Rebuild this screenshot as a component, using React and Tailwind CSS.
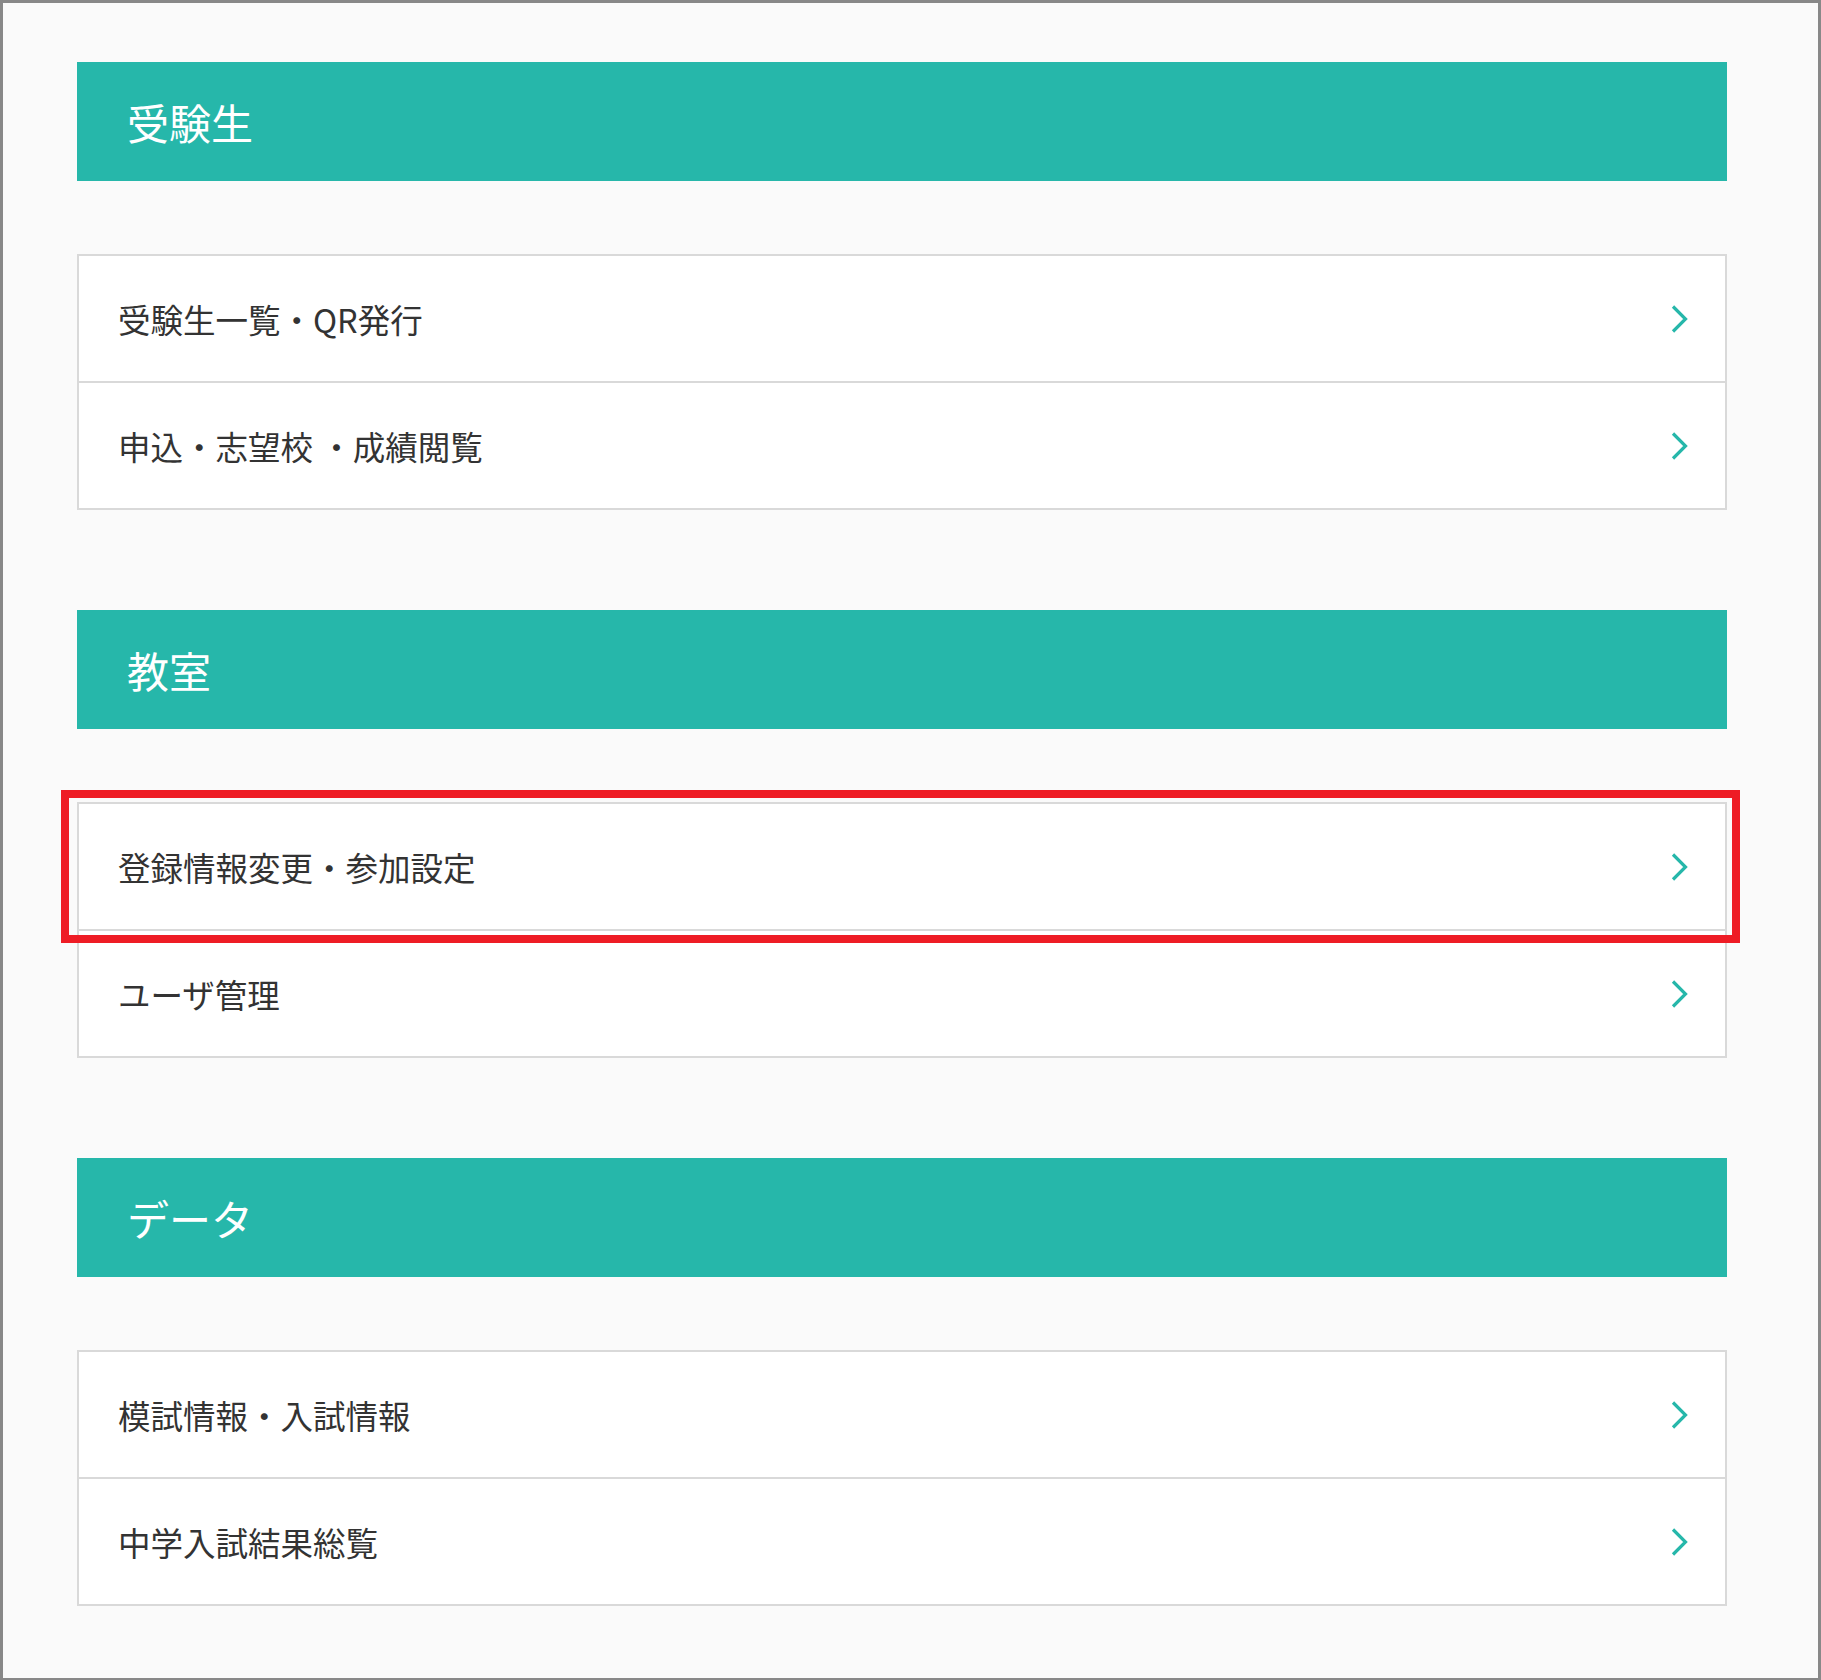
import React from 'react';

const font = { fontFamily: '"Noto Sans CJK JP", "Noto Sans", sans-serif' };

// Menu sections
const sections = [
  { title: '受験生', items: ['受験生一覧・QR発行', '申込・志望校 ・成績閲覧'] },
  { title: '教室', items: ['登録情報変更・参加設定', 'ユーザ管理'], highlight: 0 },
  { title: 'データ', items: ['模試情報・入試情報', '中学入試結果総覧'] },
];

const Chevron = () => (
  <svg width="17" height="28" viewBox="0 0 17 28" fill="none" className="shrink-0">
    <polyline points="2,1.5 14.5,14 2,26.5" stroke="#26b7aa" strokeWidth="3.2" />
  </svg>
);

const MenuRow = ({ label, first }) => (
  <a
    href="#"
    className={`box-content flex items-center justify-between h-[125px] pl-[39px] pr-[37px] bg-white ${first ? '' : 'border-t-2 border-[#d9d9d9]'}`}
  >
    <span className="text-[32.5px] text-[#333333] leading-none pt-[2px]">{label}</span>
    <Chevron />
  </a>
);

const Section = ({ title, items, highlight }) => (
  <section className="flex flex-col gap-[73px]">
    <div className="h-[119px] bg-[#26b7aa] flex items-center pl-[50px]">
      <h2 className="text-[42px] text-white leading-none font-normal">{title}</h2>
    </div>
    <div className="relative border-2 border-[#d9d9d9] bg-white">
      {items.map((item, i) => (
        <MenuRow key={item} label={item} first={i === 0} />
      ))}
      {highlight !== undefined && (
        <div className="absolute top-[-14px] left-[-18px] right-[-15px] h-[153px] border-[8px] border-[#ee1c25] pointer-events-none" />
      )}
    </div>
  </section>
);

const App = () => {
  return (
    <div
      className="min-h-screen bg-[#fafafa] border-[3px] border-[#888888] pt-[59px] pb-[72px] pl-[74px] pr-[91px] flex flex-col gap-[100px]"
      style={font}
    >
      {sections.map((s) => (
        <Section key={s.title} {...s} />
      ))}
    </div>
  );
};

export default App;
